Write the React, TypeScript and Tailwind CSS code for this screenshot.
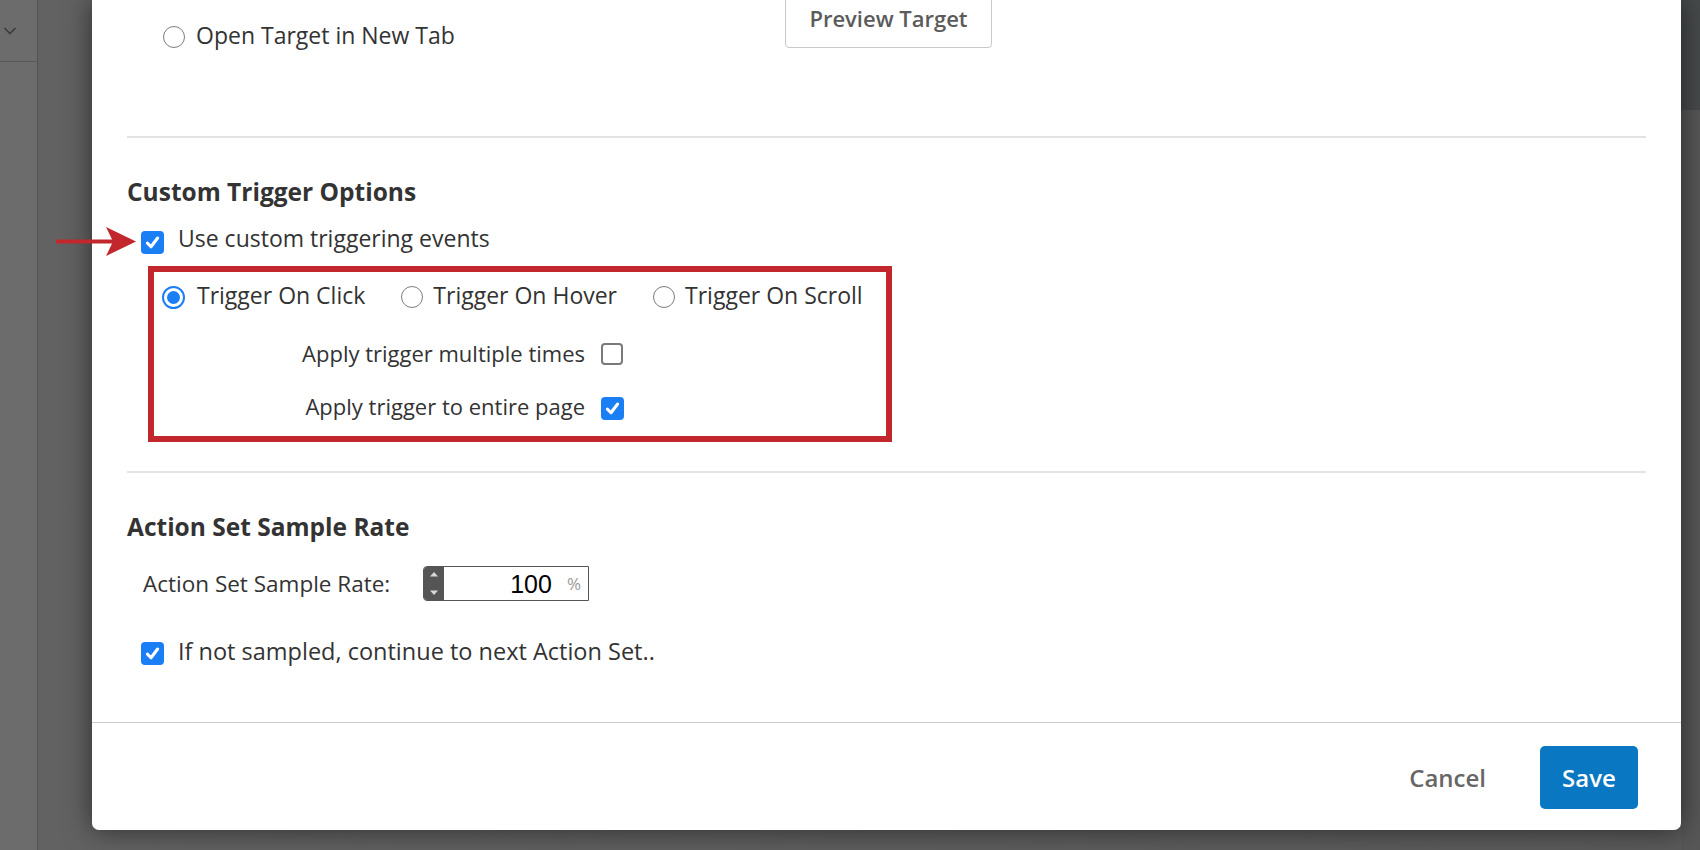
import React from "react";

const BLUE = "bg-[#1a7ef5]";

function CheckBox({ checked }: { checked: boolean }) {
  if (checked) {
    return (
      <span className={`flex h-[23px] w-[23px] shrink-0 items-center justify-center rounded-[4px] ${BLUE}`}>
        <svg viewBox="0 0 16 16" className="h-[17px] w-[17px]">
          <path d="M3.2 8.6 L6.6 12 L12.8 3.8" fill="none" stroke="white" strokeWidth="2.9" strokeLinecap="round" strokeLinejoin="round" />
        </svg>
      </span>
    );
  }
  return <span className="block h-[22px] w-[22px] shrink-0 rounded-[4px] border-2 border-[#7a7a7a] bg-white" />;
}

function Radio({ selected }: { selected: boolean }) {
  if (selected) {
    return (
      <span className="flex h-[23px] w-[23px] shrink-0 items-center justify-center rounded-full border-[2px] border-[#1a7ef5] bg-white">
        <span className="block h-[13px] w-[13px] rounded-full bg-[#1a7ef5]" />
      </span>
    );
  }
  return <span className="block h-[22px] w-[22px] shrink-0 rounded-full border border-[#7d7d7d] bg-white" />;
}

export default function App() {
  return (
    <div className="relative flex h-[850px] w-[1700px] overflow-hidden bg-[#606060] font-['Open_Sans',sans-serif] text-[#333333]">
      {/* left sidebar strip */}
      <div className="flex h-full w-[38px] flex-col border-r border-[#525252] bg-[#6c6c6c]">
        <div className="flex h-[62px] items-center border-b border-[#585858] pl-[3px]">
          <svg viewBox="0 0 14 10" className="h-[10px] w-[14px]">
            <path d="M1.5 2 L7 7.5 L12.5 2" fill="none" stroke="#3c3c3c" strokeWidth="1.6" />
          </svg>
        </div>
        <div className="flex-1" />
      </div>
      {/* backdrop */}
      <div className="flex-1 bg-gradient-to-r from-[#626262] to-[#5a5a5a]" />
      <div className="flex h-full w-[19px] flex-col">
        <div className="h-[110px] bg-[#474a4b]" />
        <div className="flex-1 bg-[#575757]" />
      </div>

      {/* modal */}
      <div className="absolute left-[92px] top-0 flex h-[830px] w-[1589px] flex-col rounded-b-[7px] bg-white shadow-[0_0_28px_rgba(0,0,0,0.55)]">
        <div className="flex-1 px-[35px]">
          {/* row 1 */}
          <div className="flex h-[48px] items-start">
            <div className="ml-[36px] mt-[26px] flex w-[622px] items-center gap-[11px]">
              <Radio selected={false} />
              <span className="-mt-[4px] text-[23px] leading-[24px]">Open Target in New Tab</span>
            </div>
            <button className="-mt-[12px] flex h-[60px] w-[207px] items-end justify-center rounded-b-[4px] border border-[#c9c9c9] pb-[16px] text-[22px] font-semibold leading-[26px] text-[#5b5b5b]">
              Preview Target
            </button>
          </div>

          <div className="mt-[88px] h-[2px] bg-[#e3e3e3]" />

          <h2 className="mt-[40px] h-[28px] text-[24.5px] font-bold leading-[28px] text-[#333333]">Custom Trigger Options</h2>

          <div className="mt-[25px] flex h-[23px] items-center gap-[14px] pl-[14px]">
            <CheckBox checked />
            <span className="-mt-[9px] text-[23px] leading-[24px]">Use custom triggering events</span>
          </div>

          <div className="ml-[21px] mt-[12px] box-border h-[176px] w-[744px] border-[6px] border-[#c1272d]">
            <div className="ml-[8px] mt-[13px] flex h-[24px] items-center">
              <Radio selected />
              <span className="-mt-[4px] ml-[12px] text-[23px] leading-[24px]">Trigger On Click</span>
              <span className="ml-[36px]"><Radio selected={false} /></span>
              <span className="-mt-[4px] ml-[10px] text-[23px] leading-[24px]">Trigger On Hover</span>
              <span className="ml-[36px]"><Radio selected={false} /></span>
              <span className="-mt-[4px] ml-[10px] text-[23px] leading-[24px]">Trigger On Scroll</span>
            </div>
            <div className="mt-[33px] flex h-[24px] items-center">
              <span className="-mt-[2px] w-[431px] text-right text-[22px] leading-[24px]">Apply trigger multiple times</span>
              <span className="ml-[16px]"><CheckBox checked={false} /></span>
            </div>
            <div className="mt-[30px] flex h-[24px] items-center">
              <span className="-mt-[5px] w-[431px] text-right text-[22px] leading-[24px]">Apply trigger to entire page</span>
              <span className="ml-[16px]"><CheckBox checked /></span>
            </div>
          </div>

          <div className="mt-[29px] h-[2px] bg-[#e3e3e3]" />

          <h2 className="mt-[40px] h-[28px] text-[24.5px] font-bold leading-[28px] text-[#333333]">Action Set Sample Rate</h2>

          <div className="mt-[25px] flex h-[35px] items-center pl-[16px]">
            <span className="w-[280px] text-[22.5px] leading-[24px]">Action Set Sample Rate:</span>
            <div className="flex h-[35px] w-[166px] overflow-hidden rounded-l-[4px] border border-[#555555]">
              <div className="flex w-[20px] flex-col items-center justify-between bg-[#555555] py-[4px]">
                <svg viewBox="0 0 10 6" className="h-[6px] w-[10px]"><path d="M1 5.5 L5 1 L9 5.5 Z" fill="#d8d8d8" /></svg>
                <svg viewBox="0 0 10 6" className="h-[6px] w-[10px]"><path d="M1 0.5 L5 5 L9 0.5 Z" fill="#d8d8d8" /></svg>
              </div>
              <div className="flex flex-1 items-center justify-end pr-[7px]">
                <span className="font-['Liberation_Sans',sans-serif] text-[25px] leading-[28px] text-black">100</span>
                <span className="ml-[15px] text-[17px] leading-[20px] text-[#9a9a9a]">%</span>
              </div>
            </div>
          </div>

          <div className="mt-[41px] flex h-[23px] items-center gap-[14px] pl-[14px]">
            <CheckBox checked />
            <span className="-mt-[5px] text-[23.5px] leading-[24px]">If not sampled, continue to next Action Set..</span>
          </div>
        </div>

        {/* footer */}
        <div className="flex h-[108px] items-start justify-end gap-[54px] border-t border-[#cccccc] pr-[43px] pt-[23px]">
          <button className="flex h-[63px] items-center text-[24px] font-semibold text-[#666666]">Cancel</button>
          <button className="flex h-[63px] w-[98px] items-center justify-center rounded-[5px] bg-[#0a77c2] text-[24px] font-semibold text-white">Save</button>
        </div>
      </div>

      {/* annotation arrow */}
      <svg viewBox="0 0 80 30" className="absolute left-[56px] top-[227px] h-[30px] w-[80px]">
        <line x1="0" y1="14.5" x2="60" y2="14.5" stroke="#c1272d" strokeWidth="4" />
        <path d="M50 0 L80 14.5 L50 29 L57 14.5 Z" fill="#c1272d" />
      </svg>
    </div>
  );
}
